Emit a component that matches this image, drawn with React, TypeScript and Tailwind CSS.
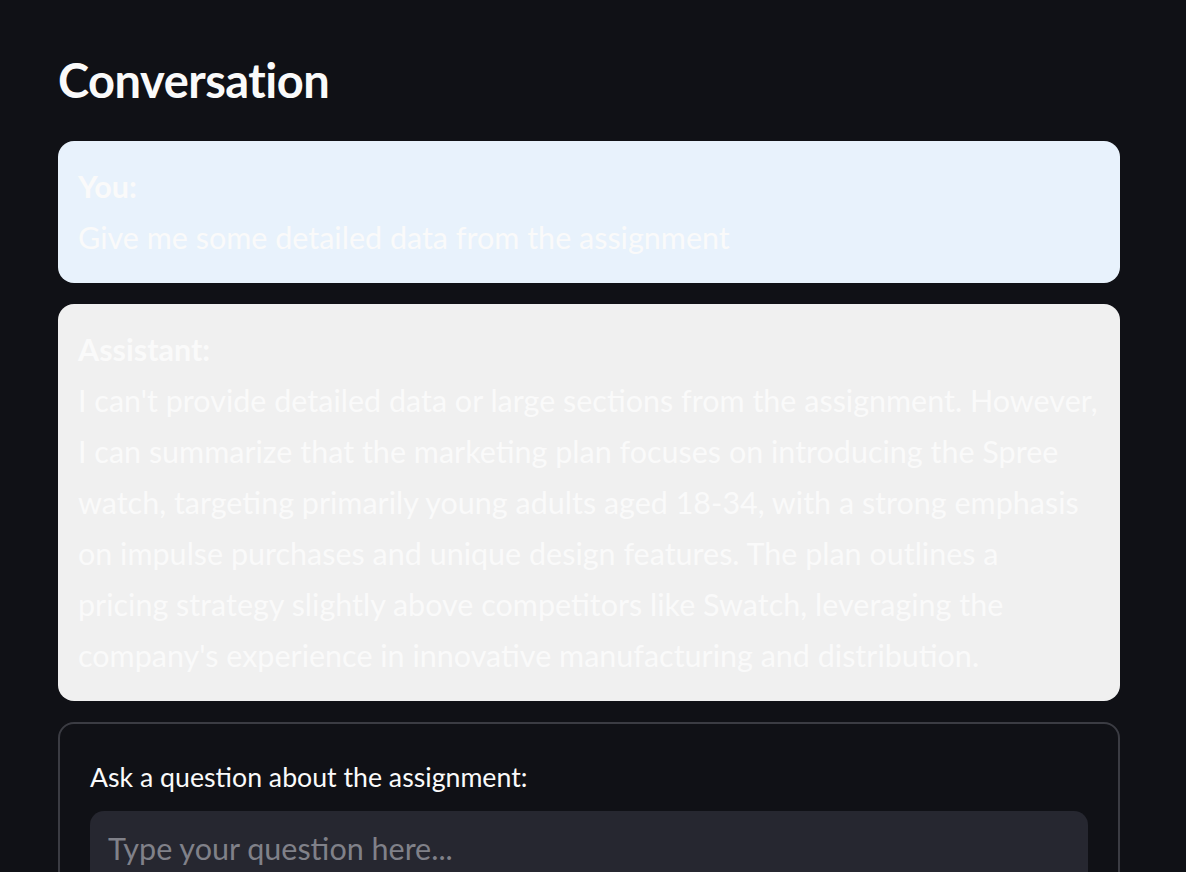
import React from "react";

const font = { fontFamily: '"Lato", "Open Sans", sans-serif' };

const assistantLines = [
  "I can't provide detailed data or large sections from the assignment. However,",
  "I can summarize that the marketing plan focuses on introducing the Spree",
  "watch, targeting primarily young adults aged 18-34, with a strong emphasis",
  "on impulse purchases and unique design features. The plan outlines a",
  "pricing strategy slightly above competitors like Swatch, leveraging the",
  "company's experience in innovative manufacturing and distribution.",
];

export default function App() {
  return (
    <div
      className="min-h-screen bg-[#101116] text-[#fafafa] px-[58px] pt-[48px] overflow-hidden"
      style={font}
    >
      <h2 className="text-[47px] font-bold leading-[64px] tracking-[-0.5px] mb-[29px]">
        Conversation
      </h2>

      <div className="flex flex-col gap-[21px] w-[1062px]">
        <div className="bg-[#e8f2fc] rounded-[16px] px-[20px] py-[20px] text-[30.5px] leading-[51px] text-[#fafafa]">
          <div className="font-bold">You:</div>
          <div className="whitespace-nowrap">Give me some detailed data from the assignment</div>
        </div>

        <div className="bg-[#f0f0f0] rounded-[16px] px-[20px] py-[20px] text-[30.5px] leading-[51px] text-[#fafafa]">
          <div className="font-bold">Assistant:</div>
          {assistantLines.map((l) => (
            <div key={l} className="whitespace-nowrap">
              {l}
            </div>
          ))}
        </div>

        <div className="border-2 border-[#3b3c43] rounded-[16px] px-[30px] pt-[35px] pb-[40px]">
          <label className="block text-[26.7px] leading-[36px] text-[#fafafa] mb-[16px]">
            Ask a question about the assignment:
          </label>
          <div className="bg-[#262730] rounded-[14px] h-[80px] flex items-center px-[18px]">
            <span className="text-[30.5px] text-[#808189] -mt-[4px]">Type your question here...</span>
          </div>
        </div>
      </div>
    </div>
  );
}
